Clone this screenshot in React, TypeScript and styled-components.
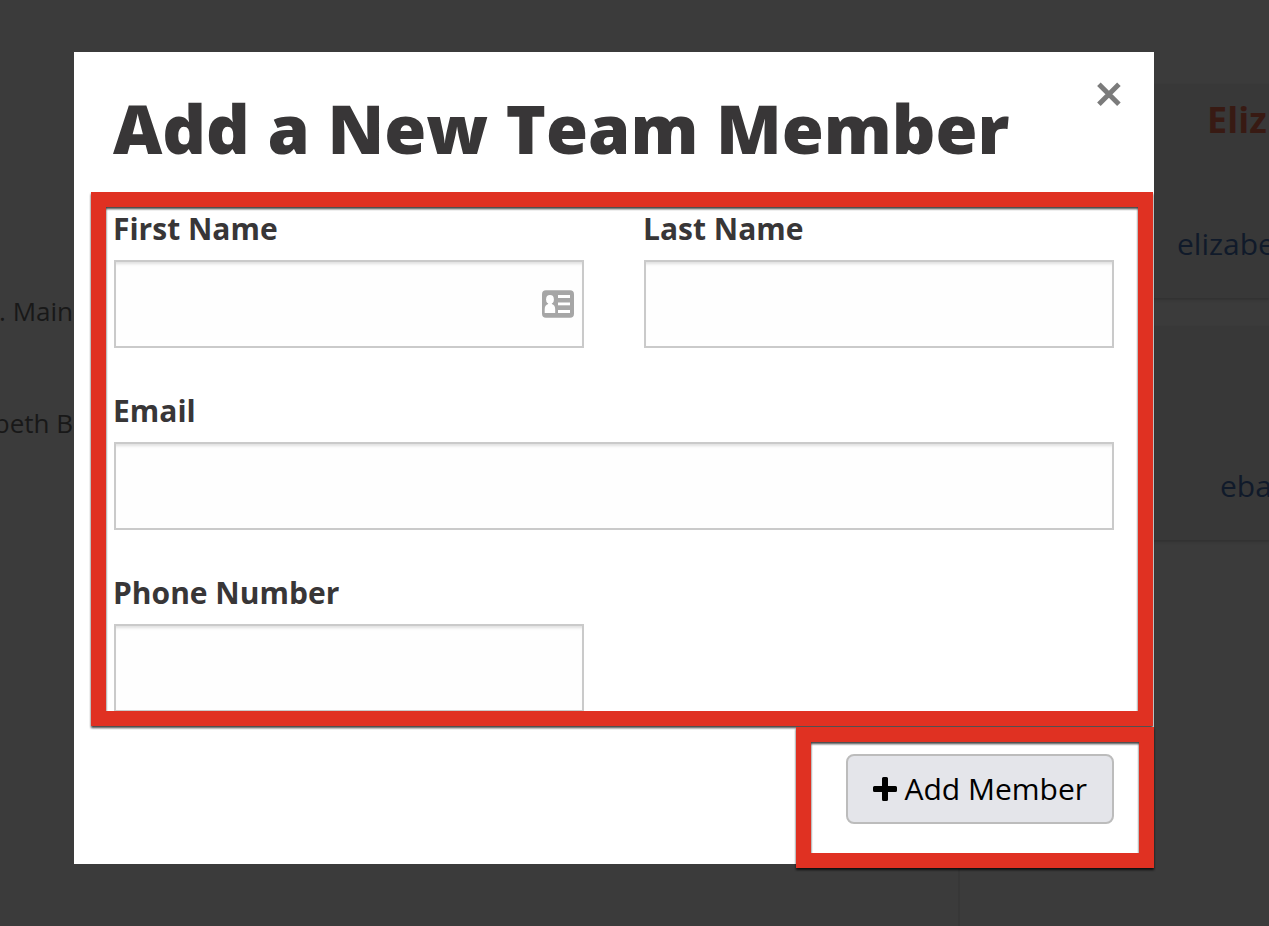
import React from "react";
import styled, { createGlobalStyle } from "styled-components";

const GlobalStyle = createGlobalStyle`
  *, *::before, *::after { box-sizing: border-box; }
  body {
    margin: 0;
    background: #3b3b3b;
    color: #383637;
    font-family: "Open Sans", "Noto Sans", sans-serif;
    overflow: hidden;
  }
`;

const Page = styled.div`
  position: relative;
  height: 100vh;
  overflow: hidden;
`;

const Backdrop = styled.div`
  display: flex;
  justify-content: space-between;
  height: 100%;
  padding-top: 84px;
`;

const Details = styled.div`
  display: flex;
  flex-direction: column;
  gap: 76px;
  width: 74px;
  padding: 209px 1px 0 0;
  overflow: hidden;
`;

const Detail = styled.p`
  display: flex;
  justify-content: flex-end;
  margin: 0;
  color: #181818;
  font-size: 26px;
  line-height: 36px;
  white-space: pre;
`;

const Members = styled.div`
  display: flex;
  flex-direction: column;
  gap: 28px;
  width: 311px;
  border-left: 2px solid #373737;
`;

const MemberCard = styled.section<{ $indent: number }>`
  height: 214px;
  padding: 12px 0 0 ${(p) => p.$indent}px;
  background: #383838;
  box-shadow: 0 2px 2px #323232;
  overflow: hidden;
  white-space: nowrap;
`;

const MemberName = styled.h2`
  height: 48px;
  margin: 0 0 80px 30px;
  color: #381a13;
  font-size: 36px;
  font-weight: 700;
  line-height: 48px;
`;

const MemberEmail = styled.a`
  color: #101a2a;
  font-size: 30px;
  line-height: 40px;
  text-decoration: none;
`;

const Overlay = styled.div`
  position: absolute;
  inset: 0;
  display: flex;
  padding: 52px 115px 62px 74px;
`;

const Dialog = styled.form`
  display: flex;
  flex: 1;
  flex-direction: column;
  min-width: 0;
  background: #fff;
`;

const DialogHeader = styled.header`
  display: flex;
  align-items: flex-start;
  justify-content: space-between;
  padding: 30px 32px 18px 39px;
`;

const Title = styled.h1`
  margin: 0;
  font-size: 68px;
  font-weight: 800;
  line-height: 92px;
  white-space: nowrap;
`;

const CloseButton = styled.button`
  display: flex;
  padding: 0;
  border: 0;
  background: none;
  color: #7b7b7b;
  cursor: pointer;
`;

const BodyArea = styled.div`
  position: relative;
  flex: 1;
  min-height: 0;
`;

const Fields = styled.div`
  display: grid;
  grid-template-columns: 1fr 1fr;
  gap: 42px 60px;
  height: 100%;
  padding: 16px 40px 0;
  align-content: start;
  overflow: hidden;
`;

const Field = styled.div<{ $wide?: boolean }>`
  display: flex;
  flex-direction: column;
  gap: 10px;
  grid-column: ${(p) => (p.$wide ? "1 / -1" : "auto")};
`;

const Label = styled.label`
  margin-left: -1px;
  font-size: 30px;
  font-weight: 700;
  line-height: 42px;
`;

const InputWrap = styled.div`
  position: relative;
  display: flex;
`;

const Input = styled.input`
  width: 100%;
  height: 88px;
  padding: 0 20px;
  border: 2px solid #cacaca;
  border-radius: 0;
  outline: none;
  background: #fefefe;
  box-shadow: inset 0 4px 3px -2px rgba(0, 0, 0, 0.12);
  font: inherit;
  font-size: 30px;
`;

const ContactIcon = styled.svg`
  position: absolute;
  top: 30px;
  right: 10px;
`;

const DialogFooter = styled.footer`
  position: relative;
  display: flex;
  justify-content: flex-end;
  padding: 42px 40px 40px;
`;

const AddButton = styled.button`
  display: flex;
  align-items: center;
  gap: 7px;
  height: 70px;
  padding: 0 25px;
  border: 2px solid #bcbcbc;
  border-radius: 8px;
  background: #e4e5ea;
  color: #000;
  font: inherit;
  font-size: 30px;
  line-height: 40px;
  white-space: nowrap;
  cursor: pointer;
`;

const Highlight = styled.div`
  position: absolute;
  border: 15px solid #e03122;
  filter: drop-shadow(0 2px 1px rgba(0, 0, 0, 0.75));
  pointer-events: none;
`;

const FieldsHighlight = styled(Highlight)`
  inset: 0 1px -14px 17px;
`;

const SubmitHighlight = styled(Highlight)`
  top: 15px;
  right: 0;
  bottom: -4px;
  width: 358px;
`;

export default function App() {
  return (
    <Page>
      <GlobalStyle />
      <Backdrop>
        <Details>
          <Detail>. Main</Detail>
          <Detail>beth B</Detail>
        </Details>
        <Members>
          <MemberCard $indent={217}>
            <MemberName>Eliz</MemberName>
            <MemberEmail href="#">elizabe</MemberEmail>
          </MemberCard>
          <MemberCard $indent={260}>
            <MemberName />
            <MemberEmail href="#">eba</MemberEmail>
          </MemberCard>
        </Members>
      </Backdrop>
      <Overlay>
        <Dialog
          role="dialog"
          aria-labelledby="dialog-title"
          onSubmit={(e) => e.preventDefault()}
        >
          <DialogHeader>
            <Title id="dialog-title">Add a New Team Member</Title>
            <CloseButton type="button" aria-label="Close">
              <svg width="26" height="26" viewBox="0 0 26 26" fill="none" stroke="currentColor" strokeWidth="5">
                <path d="M2.900 2.200 22.900 22.200M22.900 2.200 2.900 22.200" />
              </svg>
            </CloseButton>
          </DialogHeader>
          <BodyArea>
            <Fields>
              <Field>
                <Label htmlFor="first-name">First Name</Label>
                <InputWrap>
                  <Input id="first-name" type="text" />
                  <ContactIcon width="32" height="28" viewBox="0 0 32 28" aria-hidden="true">
                    <rect y="0.3" width="32" height="27.4" rx="4" fill="#a6a6a6" />
                    <g fill="#fff">
                      <ellipse cx="8" cy="9.4" rx="3.9" ry="4.3" />
                      <path d="M6.200 12h3.600v2c2.200.6 3.400 2.600 3.400 5.200v3.800H2.700v-3.800c0-2.600 1.300-4.600 3.500-5.200z" />
                      <rect x="16" y="5" width="12" height="3" />
                      <rect x="16" y="12.500" width="12" height="2.800" />
                      <rect x="16" y="20" width="12" height="3" />
                    </g>
                  </ContactIcon>
                </InputWrap>
              </Field>
              <Field>
                <Label htmlFor="last-name">Last Name</Label>
                <Input id="last-name" type="text" />
              </Field>
              <Field $wide>
                <Label htmlFor="email">Email</Label>
                <Input id="email" type="email" />
              </Field>
              <Field>
                <Label htmlFor="phone">Phone Number</Label>
                <Input id="phone" type="tel" />
              </Field>
            </Fields>
            <FieldsHighlight />
          </BodyArea>
          <DialogFooter>
            <AddButton type="submit">
              <svg width="24" height="24" viewBox="0 0 24 24" aria-hidden="true">
                <path d="M10.500 0h3a1.500 1.500 0 0 1 1.500 1.500V9h7.500a1.500 1.500 0 0 1 1.500 1.500v3a1.500 1.500 0 0 1-1.500 1.500H15v7.500a1.500 1.500 0 0 1-1.500 1.500h-3a1.500 1.500 0 0 1-1.500-1.500V15H1.500A1.500 1.500 0 0 1 0 13.500v-3A1.500 1.500 0 0 1 1.500 9H9V1.500A1.500 1.500 0 0 1 10.500 0z" />
              </svg>
              Add Member
            </AddButton>
            <SubmitHighlight />
          </DialogFooter>
        </Dialog>
      </Overlay>
    </Page>
  );
}
